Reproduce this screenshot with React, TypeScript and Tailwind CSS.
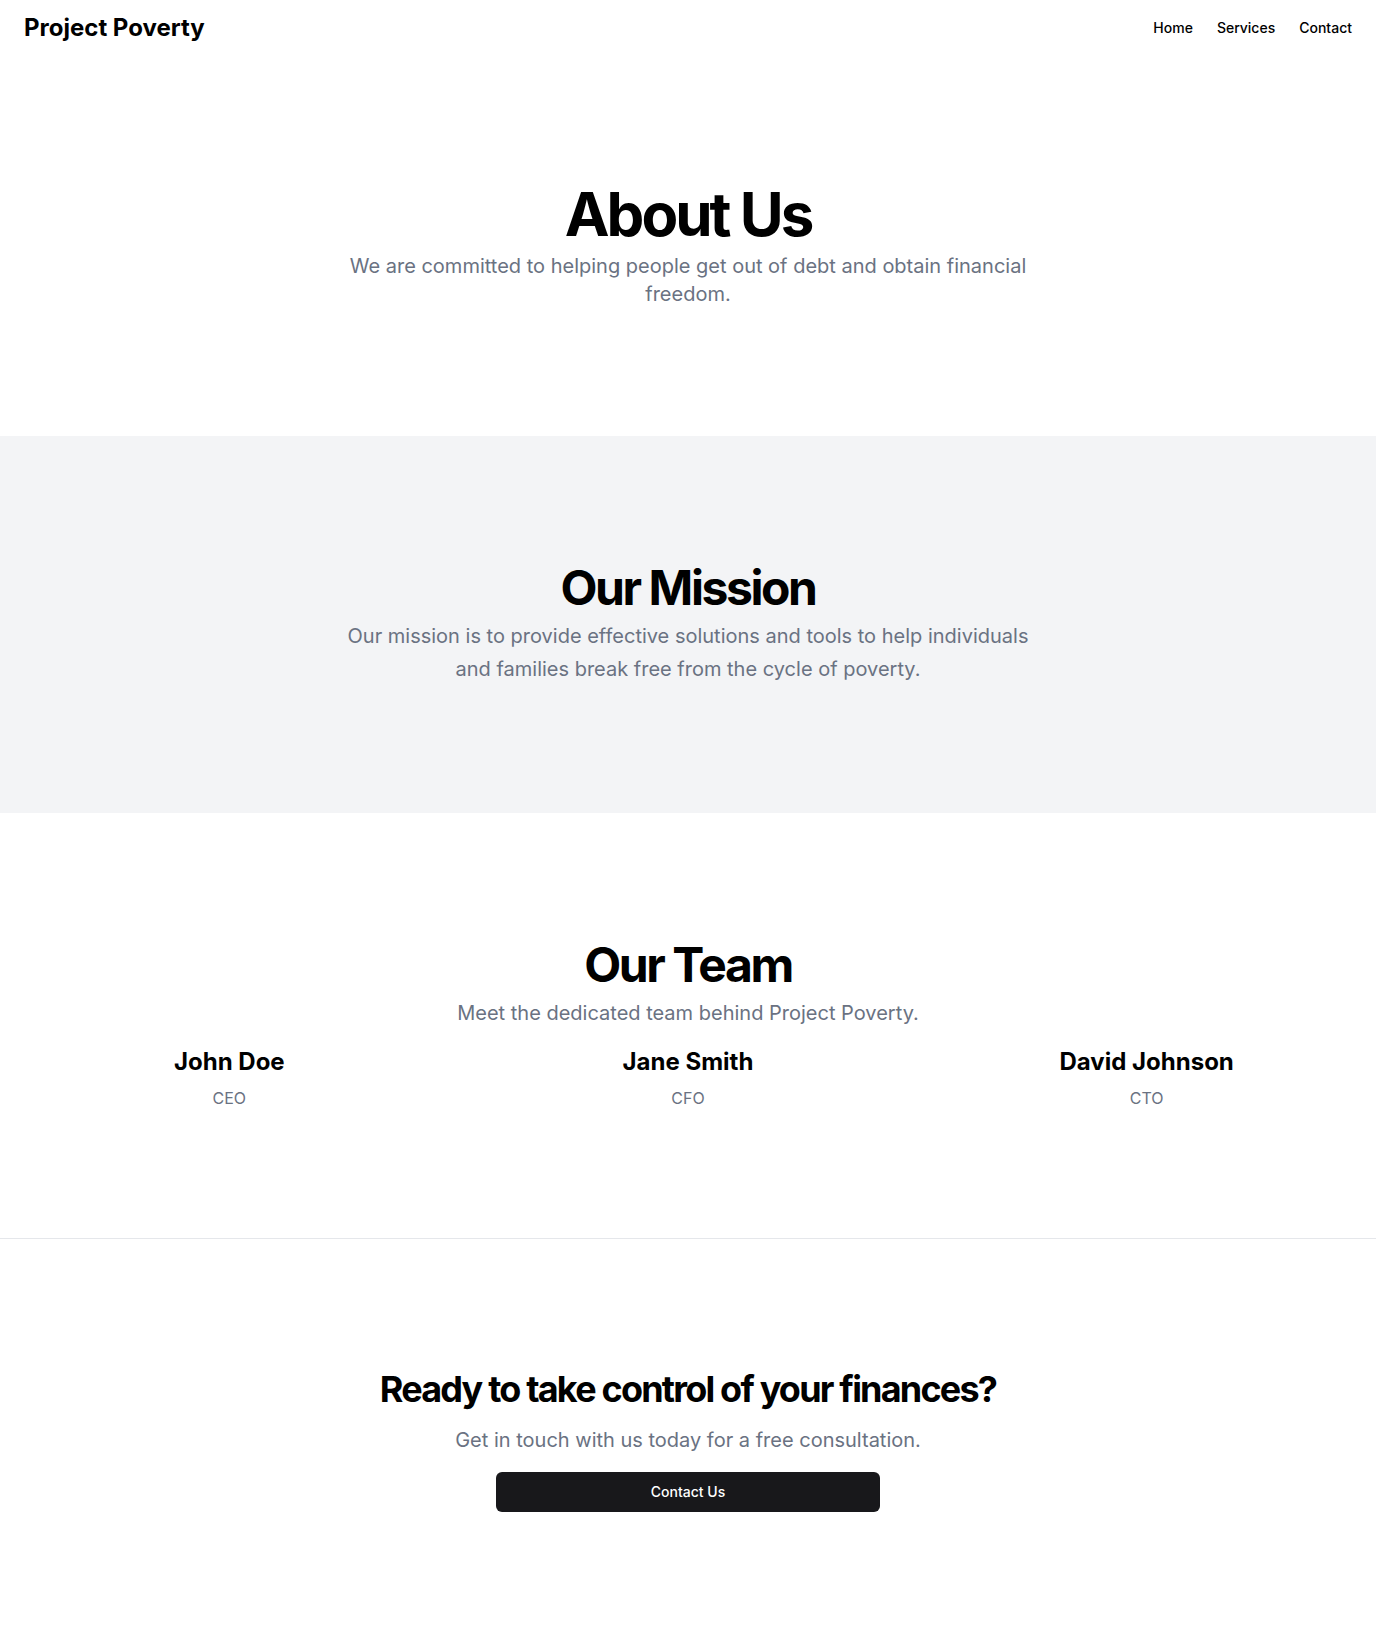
import React from 'react';

const team = [
  { name: 'John Doe', role: 'CEO' },
  { name: 'Jane Smith', role: 'CFO' },
  { name: 'David Johnson', role: 'CTO' },
];

export default function App() {
  return (
    <div className="min-h-screen flex flex-col bg-white text-black font-['Inter',sans-serif]">
      <header className="h-14 px-6 flex items-center">
        <a href="#" className="text-2xl font-bold">Project Poverty</a>
        <nav className="ml-auto flex gap-6">
          <a href="#" className="text-sm font-medium">Home</a>
          <a href="#" className="text-sm font-medium">Services</a>
          <a href="#" className="text-sm font-medium">Contact</a>
        </nav>
      </header>

      <main className="flex-1">
        {/* About */}
        <section className="w-full py-32">
          <div className="px-6 flex flex-col items-center text-center space-y-2">
            <h1 className="text-6xl/none font-bold tracking-tighter">About Us</h1>
            <p className="max-w-[700px] mx-auto text-xl text-gray-500">
              We are committed to helping people get out of debt and obtain financial freedom.
            </p>
          </div>
        </section>

        {/* Mission */}
        <section className="w-full py-32 bg-gray-100">
          <div className="px-6 flex flex-col items-center text-center space-y-2">
            <h2 className="text-5xl/none font-bold tracking-tighter">Our Mission</h2>
            <p className="max-w-[700px] mx-auto text-xl/relaxed text-gray-500">
              Our mission is to provide effective solutions and tools to help individuals and families break free from the cycle of poverty.
            </p>
          </div>
        </section>

        {/* Team */}
        <section className="w-full py-32">
          <div className="px-6 flex flex-col items-center text-center">
            <h2 className="text-5xl/none font-bold tracking-tighter">Our Team</h2>
            <p className="mt-2 max-w-[700px] mx-auto text-xl/relaxed text-gray-500">
              Meet the dedicated team behind Project Poverty.
            </p>
            <div className="mt-4 w-full grid grid-cols-3 gap-12">
              {team.map((m) => (
                <div key={m.name} className="flex flex-col items-center space-y-2">
                  <h3 className="text-2xl font-bold">{m.name}</h3>
                  <p className="text-base text-gray-500">{m.role}</p>
                </div>
              ))}
            </div>
          </div>
        </section>

        {/* CTA */}
        <section className="w-full py-32 border-t border-gray-200">
          <div className="px-6 flex flex-col items-center text-center">
            <h2 className="text-4xl leading-tight font-bold tracking-tighter">
              Ready to take control of your finances?
            </h2>
            <p className="mt-3 max-w-[600px] mx-auto text-xl/relaxed text-gray-500">
              Get in touch with us today for a free consultation.
            </p>
            <a
              href="#"
              className="mt-4 w-full max-w-sm h-10 flex items-center justify-center rounded-md bg-zinc-900 text-white text-sm font-medium"
            >
              Contact Us
            </a>
          </div>
        </section>
      </main>
    </div>
  );
}
